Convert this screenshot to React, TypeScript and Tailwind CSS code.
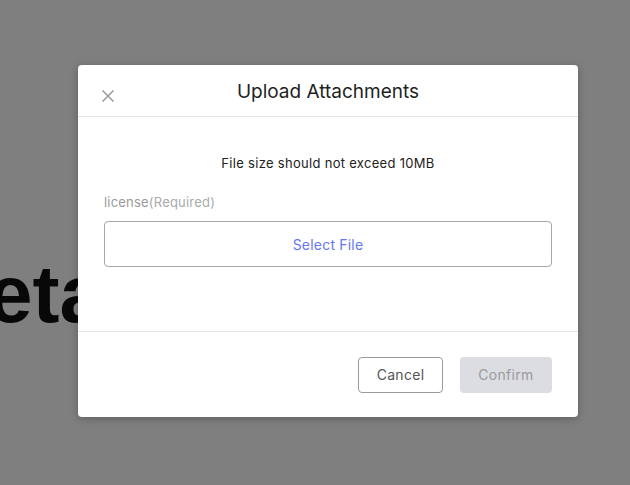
import React from "react";

export default function App() {
  return (
    <div className="relative w-[630px] h-[485px] overflow-hidden bg-white" style={{ fontFamily: "Inter, 'Noto Sans', sans-serif" }}>
      <div className="pt-[254px] -ml-[71px] text-[81px] leading-[80px] font-bold text-[#111]" style={{ fontFamily: "'Liberation Sans', Arial, sans-serif" }}>
        Details
      </div>
      <div className="absolute inset-0 bg-black/50">
        <div className="ml-[78px] mt-[65px] w-[500px] h-[352px] bg-white rounded-[4px] shadow-[0_2px_8px_rgba(0,0,0,0.25)] flex flex-col">
          <div className="relative h-[52px] border-b border-[#e4e4e4] flex items-center justify-center">
            <svg className="absolute left-[23px] top-[24px]" width="14" height="14" viewBox="0 0 14 14" fill="none">
              <path d="M1.5 1.5L12.5 12.5M12.5 1.5L1.5 12.5" stroke="#9a9a9a" strokeWidth="1.5" />
            </svg>
            <span className="text-[19px] leading-[24px] text-[#1f1f1f] mt-[3px]">Upload Attachments</span>
          </div>
          <div className="flex-1 px-[26px] pt-[37px] border-b border-[#e4e4e4] flex flex-col">
            <div className="text-center text-[13px] leading-[18px] text-[#222] tracking-[0.3px]">File size should not exceed 10MB</div>
            <div className="mt-[21px] text-[13px] leading-[18px] tracking-[0.2px]">
              <span className="text-[#9a9a9a]">license</span>
              <span className="text-[#aaaaaa]">(Required)</span>
            </div>
            <div className="mt-[10px] h-[46px] border border-[#a8a8a8] rounded-[4px] flex items-center justify-center text-[14px] text-[#6677ee] tracking-[0.2px]">
              Select File
            </div>
          </div>
          <div className="h-[85px] flex items-center justify-end gap-[17px] pr-[26px]">
            <button className="w-[85px] h-[36px] border border-[#9a9a9a] rounded-[4px] text-[14px] text-[#555] tracking-[0.3px]">Cancel</button>
            <button className="w-[92px] h-[36px] bg-[#dcdde3] rounded-[4px] text-[14px] text-[#9a9a9a] tracking-[0.3px]">Confirm</button>
          </div>
        </div>
      </div>
    </div>
  );
}
